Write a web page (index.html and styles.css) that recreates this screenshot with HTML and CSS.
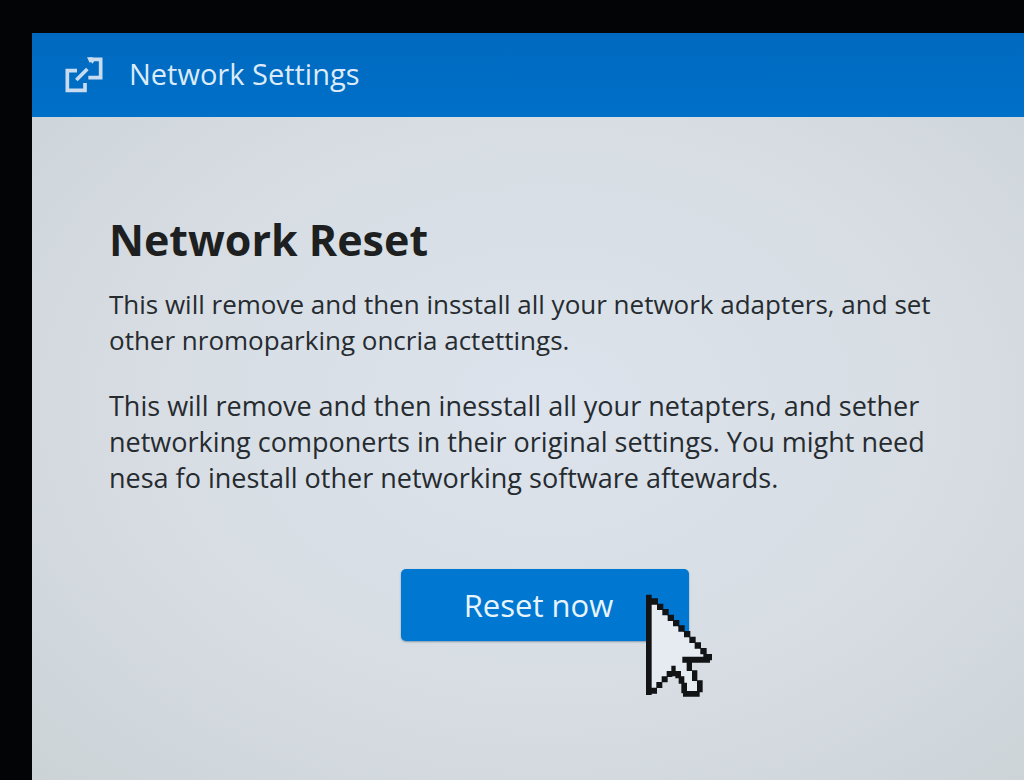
FILE: index.html
```
<!DOCTYPE html>
<html lang="en">
<head>
  <meta charset="UTF-8">
  <meta name="viewport" content="width=device-width, initial-scale=1.0">
  <title>Network Settings</title>
  <link rel="stylesheet" href="styles.css">
</head>
<body>
  <div class="window">
    <header class="titlebar">
      <svg class="titlebar-icon" viewBox="30 36 114 114" aria-hidden="true">
        <path d="M66 80H37V139H90V117" />
        <path d="M104 46H137V101H100" />
        <path d="M64 108L97 75" />
        <path class="arrow-tip" d="M96 40H112L118 50L113 59L108 54L104 56Z" />
      </svg>
      <span class="titlebar-title">Network Settings</span>
    </header>

    <main class="content">
      <h1>Network Reset</h1>
      <p class="summary">This will remove and then insstall all your network adapters, and set other nromoparking oncria actettings.</p>
      <p>This will remove and then inesstall all your netapters, and sether networking componerts in their original settings. You might need nesa fo inestall other networking software aftewards.</p>

      <div class="actions">
        <button type="button" class="reset-button">
          Reset now
          <!-- mouse pointer -->
          <svg class="pointer" viewBox="30 25 204 312" aria-hidden="true">
            <path class="pointer-fill" d="M42 40L60 50L218 214V222H162V240L176 262V285L190 300V322H152V300L118 254L60 316L42 322Z" />
            <path class="pointer-edge" d="M33 27h17v301h-17z
              M50 38h19v19h-19z M66 54h19v19h-19z M82 70h19v19h-19z M98 87h19v19h-19z M114 103h19v19h-19z
              M130 119h19v19h-19z M147 136h19v19h-19z M163 153h19v19h-19z M179 170h19v19h-19z M196 187h19v19h-19z
              M205 205h26v19h-26z M142 213h83v18h-83z
              M155 231h16v25h-16z M171 254h16v32h-16z M186 284h17v36h-17z
              M144 316h50v17h-50z M139 291h17v32h-17z M131 272h17v22h-17z M121 256h17v22h-17z
              M109 240h13v32h-13z M95 256h17v18h-17z M80 272h18v18h-18z M64 289h18v18h-18z M48 306h18v18h-18z" />
          </svg>
        </button>
      </div>
    </main>
  </div>
</body>
</html>
```
FILE: styles.css
```
* {
  box-sizing: border-box;
}
body {
  margin: 0;
  padding: 33px 0 0 32px; /* dark screen bezel */
  min-height: 100vh;
  display: flex;
  background-color: #030405;
  font-family: "Open Sans", "Noto Sans", sans-serif;
  color: #262b30;
}
.window {
  flex: 1;
  display: flex;
  flex-direction: column;
  background: radial-gradient(ellipse at 52% 50%, #dce3ec 0%, #d7dde3 55%, #ccd3d7 100%);
}

/* Title bar */
.titlebar {
  display: flex;
  align-items: center;
  gap: 26px;
  height: 84px;
  padding: 0 33px;
  background: linear-gradient(#0069bf, #0070c8);
  color: #dcebf7;
}
.titlebar-icon {
  width: 38px;
  height: 38px;
  fill: none;
  stroke: #c9dcef;
  stroke-width: 11;
}
.titlebar-icon .arrow-tip {
  fill: #c9dcef;
  stroke: none;
}
.titlebar-title {
  padding-bottom: 2px;
  font-size: 29px;
  line-height: 36px;
}

/* Content */
.content {
  flex: 1;
  padding: 95px 44px 84px 77px;
}
h1 {
  margin: 0 0 18px;
  font-size: 43px;
  line-height: 56px;
  font-weight: 700;
  color: #1d1f21;
}
p {
  max-width: 850px;
  margin: 0 0 30px;
  font-size: 27px;
  line-height: 36px;
}
.summary {
  font-size: 26px;
}
.actions {
  display: flex;
  justify-content: center;
  padding-top: 43px;
}
.reset-button {
  position: relative;
  width: 288px;
  height: 72px;
  padding: 0 12px 0 0;
  border: none;
  border-radius: 5px;
  background-color: #0078d2;
  box-shadow: 0 1px 2px rgba(0, 50, 90, 0.4);
  color: #e8f4fc;
  font-family: inherit;
  font-size: 31px;
  line-height: 40px;
}

/* Pointer over the button corner */
.pointer {
  position: absolute;
  top: 25px;
  left: 244px;
  width: 68px;
  height: 104px;
}
.pointer-fill {
  fill: #e6eaf1;
}
.pointer-edge {
  fill: #111315;
}
```
